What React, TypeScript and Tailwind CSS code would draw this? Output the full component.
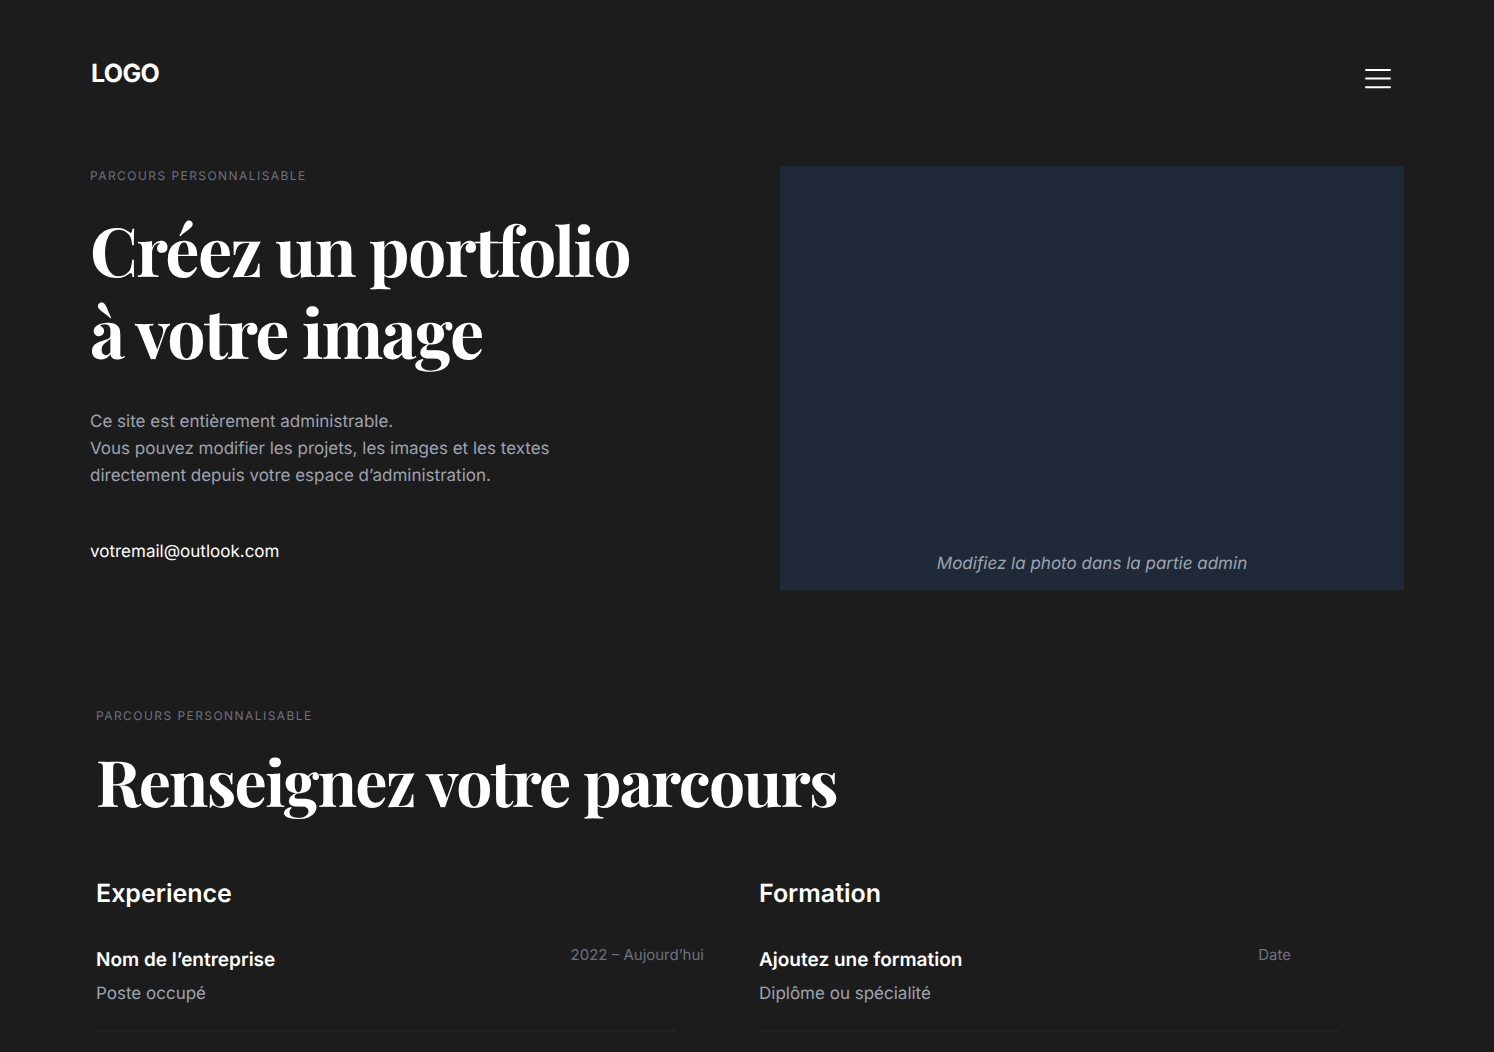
import React from "react";

const serif = "font-['Playfair_Display','Liberation_Serif',serif]";

function Eyebrow({ children }: { children: React.ReactNode }) {
  return <p className="text-xs leading-5 tracking-[0.12em] text-[#6b7280] uppercase">{children}</p>;
}

function Entry({ title, sub, date, dateClass }: { title: string; sub: string; date: string; dateClass: string }) {
  return (
    <article className="max-w-[608px]">
      <div className="flex justify-between">
        <h4 className="pt-1 text-[19px] leading-7 font-semibold text-white">{title}</h4>
        <time className={dateClass}>{date}</time>
      </div>
      <p className="mt-1.5 text-[17px] leading-7 text-[#9ca3af]">{sub}</p>
      <hr className="mt-[22px] mr-7 border-t-2 border-[#1f2329]" />
    </article>
  );
}

export default function App() {
  return (
    <div className="min-h-screen bg-[#1c1c1c] font-['Inter',sans-serif] text-white [text-rendering:geometricPrecision]">
      <header className="flex items-start justify-between pt-14 pr-[102px] pl-[91px]">
        <a href="#" className="text-[25px] leading-9 font-bold tracking-tight">LOGO</a>
        <button aria-label="Menu" className="mt-2">
          <svg width="28" height="28" viewBox="0 0 28 28" stroke="#fff" strokeWidth="2" strokeLinecap="round"><path d="M2 6H26M2 14.5H26M2 23.3H26" /></svg>
        </button>
      </header>
      <main>
        <section className="mt-[74px] flex justify-between gap-8 px-[90px]">
          <div>
            <Eyebrow>Parcours personnalisable</Eyebrow>
            <h1 className={`mt-[23px] text-[68px] leading-[82px] font-bold tracking-tight ${serif}`}>Créez un portfolio<br />à votre image</h1>
            <p className="mt-9 text-[17px] leading-[27px] text-[#9ca3af]">Ce site est entièrement administrable.<br />Vous pouvez modifier les projets, les images et les textes<br />directement depuis votre espace d’administration.</p>
            <a href="mailto:votremail@outlook.com" className="mt-12 block text-[17px] leading-7">votremail@outlook.com</a>
          </div>
          <div className="flex h-[424px] w-[624px] items-end justify-center bg-[#1f2937] pb-3">
            <p className="text-[17px] leading-7 text-[#9ca3af] italic">Modifiez la photo dans la partie admin</p>
          </div>
        </section>
        <section className="mt-[116px] px-24">
          <Eyebrow>Parcours personnalisable</Eyebrow>
          <h2 className={`mt-4 text-[64px] leading-[80px] font-bold tracking-tight ${serif}`}>Renseignez votre parcours</h2>
          <div className="mt-14 grid grid-cols-2 gap-6">
            <div>
              <h3 className="mb-8 text-[25px] leading-8 font-semibold">Experience</h3>
              <Entry title="Nom de l’entreprise" sub="Poste occupé" date="2022 – Aujourd’hui" dateClass="text-[15px] leading-[26px] text-[#6b7280]" />
            </div>
            <div>
              <h3 className="mb-8 text-[25px] leading-8 font-semibold">Formation</h3>
              <Entry title="Ajoutez une formation" sub="Diplôme ou spécialité" date="Date" dateClass="pr-[76px] text-[15px] leading-[26px] text-[#6b7280]" />
            </div>
          </div>
        </section>
      </main>
    </div>
  );
}
